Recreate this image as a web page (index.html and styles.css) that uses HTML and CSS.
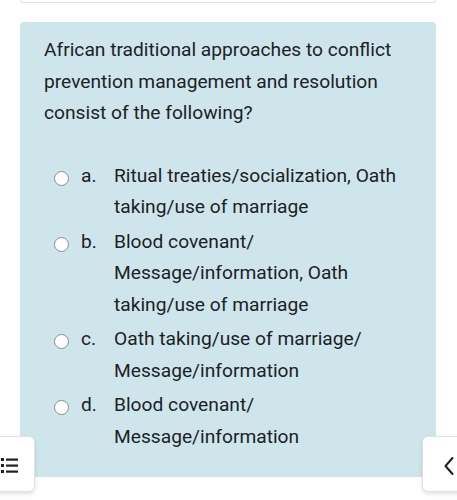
FILE: index.html
```
<!DOCTYPE html>
<html>
<head>
<meta charset="utf-8">
<link rel="stylesheet" href="styles.css">
</head>
<body>
<div class="page">
  <div class="prev-box"></div>
  <div class="card">
    <div class="qtext">African traditional approaches to conflict prevention management and resolution consist of the following?</div>
    <div class="answers">
      <div class="opt"><span class="radio"></span><span class="num">a.</span><span class="lbl">Ritual treaties/socialization, Oath taking/use of marriage</span></div>
      <div class="opt"><span class="radio"></span><span class="num">b.</span><span class="lbl">Blood covenant/ Message/information, Oath taking/use of marriage</span></div>
      <div class="opt"><span class="radio"></span><span class="num">c.</span><span class="lbl">Oath taking/use of marriage/ Message/information</span></div>
      <div class="opt"><span class="radio"></span><span class="num">d.</span><span class="lbl">Blood covenant/ Message/information</span></div>
    </div>
  </div>
</div>
<div class="fab fab-left">
  <svg width="18" height="16" viewBox="0 0 18 16">
    <rect x="0" y="1" width="3" height="3" fill="#1d2125"/>
    <rect x="5" y="1.5" width="12" height="2.2" fill="#1d2125"/>
    <rect x="0" y="7" width="3" height="3" fill="#1d2125"/>
    <rect x="5" y="7.5" width="12" height="2.2" fill="#1d2125"/>
    <rect x="0" y="13" width="3" height="3" fill="#1d2125"/>
    <rect x="5" y="13.5" width="12" height="2.2" fill="#1d2125"/>
  </svg>
</div>
<div class="fab fab-right">
  <svg width="12" height="20" viewBox="0 0 12 20">
    <path d="M9.5 2 L2.5 10 L9.5 18" fill="none" stroke="#1d2125" stroke-width="2" stroke-linecap="round" stroke-linejoin="round"/>
  </svg>
</div>
</body>
</html>
```
FILE: styles.css
```
html, body {
  margin: 0;
  padding: 0;
  background: #ffffff;
}
body {
  font-family: Roboto, "Liberation Sans", Arial, sans-serif;
  color: #1d2125;
  width: 457px;
  height: 500px;
  overflow: hidden;
}
.page {
  padding: 0 21px 0 20px;
}
.prev-box {
  height: 2px;
  border: 1px solid #dee2e6;
  border-top: none;
  border-radius: 0 0 4px 4px;
}
.card {
  margin-top: 19px;
  background: #cee6eb;
  border-radius: 4px;
  padding: 12px 24px 26px 24px;
  height: 455px;
  box-sizing: border-box;
}
.qtext {
  font-size: 19.2px;
  line-height: 31.5px;
}
.answers {
  margin-top: 31px;
  padding-left: 10px;
  display: flex;
  flex-direction: column;
  gap: 3px;
}
.opt {
  display: flex;
  align-items: flex-start;
  font-size: 19.2px;
  line-height: 31.5px;
}
.radio {
  flex: none;
  width: 13px;
  height: 13px;
  border: 1px solid #8a8d90;
  border-radius: 50%;
  background: #ffffff;
  margin-top: 11px;
  margin-right: 12px;
}
.num {
  flex: none;
  width: 33px;
}
.lbl {
  flex: 1;
}
.fab {
  position: fixed;
  top: 436px;
  height: 56px;
  background: #ffffff;
  border: 1px solid #dee2e6;
  border-radius: 6px;
  box-shadow: 0 2px 4px rgba(0,0,0,0.12);
  display: flex;
  align-items: center;
  box-sizing: border-box;
}
.fab-left {
  left: -8px;
  width: 43px;
  justify-content: flex-start;
  padding-left: 8px;
}
.fab-left svg {
  margin-top: 2px;
}
.fab-right {
  left: 422px;
  width: 44px;
  padding-left: 20px;
}
.fab-right svg {
  margin-top: 3px;
}
```
